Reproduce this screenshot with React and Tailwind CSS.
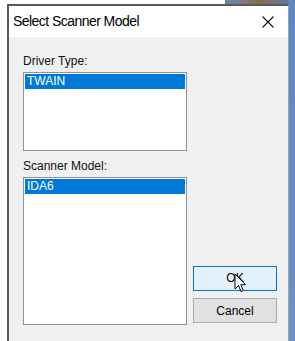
export default function App() {
  return (
    <div className="relative w-[295px] h-[341px] overflow-hidden bg-white" style={{ fontFamily: '"Liberation Sans", Arial, sans-serif' }}>
      {/* desktop background pieces behind the window */}
      <div className="absolute right-0 top-0 h-[5px] w-[70px] bg-gradient-to-r from-[#6a86b0] via-[#8a6a4a] to-[#4f78b8]" />
      <div className="absolute right-0 top-0 h-full w-[7px] bg-gradient-to-b from-[#5f86c4] to-[#6f90c8]" />
      <div className="flex h-full pt-[4px] pl-[7px] pr-[6px]">
        <div className="relative flex flex-1 flex-col border-l-2 border-t-2 border-r border-[#5a5a5a] border-r-[#9aa5b5]">
          {/* title bar */}
          <div className="flex h-[31px] items-center justify-between bg-white pl-[4px] pr-[14px]">
            <span className="text-[14px] tracking-[-0.55px] text-black">Select Scanner Model</span>
            <svg width="12" height="12" viewBox="0 0 12 12" className="mt-[1px]">
              <path d="M0.5 0.5 L11.5 11.5 M11.5 0.5 L0.5 11.5" stroke="#111" strokeWidth="1.1" fill="none" />
            </svg>
          </div>
          {/* body */}
          <div className="flex flex-1 bg-[#f0f0f0] pl-[14px] pt-[17px]">
            <div className="flex w-[164px] flex-col">
              <div className="h-[18px] text-[12px] leading-[15px] text-[#111]">Driver Type:</div>
              <div className="h-[79px] border border-[#8d939c] bg-white p-[1px]">
                <div className="h-[15px] bg-[#0078d7] pl-[2px] text-[12px] leading-[15px] text-white">TWAIN</div>
              </div>
              <div className="h-[26px] pt-[8px] text-[12px] leading-[15px] text-[#111]">Scanner Model:</div>
              <div className="h-[148px] border border-[#8d939c] bg-white p-[1px]">
                <div className="h-[15px] bg-[#0078d7] pl-[2px] text-[12px] leading-[15px] text-white">IDA6</div>
              </div>
            </div>
            <div className="ml-[6px] flex flex-col justify-end gap-[7px] pb-[18px]">
              <div className="relative flex h-[25px] w-[84px] items-center justify-center border border-[#0078d7] bg-[#e5f1fb] text-[12px] text-black">
                <span className="leading-[13px]">OK</span>
                <svg width="13" height="20" viewBox="0 0 13 20" className="absolute left-[40px] top-[6px]">
                  <path d="M1 1 L1 16 L4.5 12.5 L7 18.5 L9.3 17.5 L6.8 11.7 L11.5 11.7 Z" fill="white" stroke="black" strokeWidth="1" strokeLinejoin="miter" />
                </svg>
              </div>
              <div className="flex h-[25px] w-[84px] items-center justify-center border border-[#adadad] bg-[#e1e1e1] text-[12px] text-black">Cancel</div>
            </div>
          </div>
        </div>
      </div>
    </div>
  );
}
